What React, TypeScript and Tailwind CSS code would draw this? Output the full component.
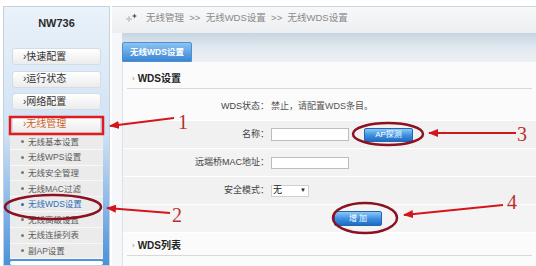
import React from "react";

const mainMenu = ["›快速配置", "›运行状态", "›网络配置"];
const subMenu = [
  "无线基本设置",
  "无线WPS设置",
  "无线安全管理",
  "无线MAC过滤",
  "无线WDS设置",
  "无线高级设置",
  "无线连接列表",
  "副AP设置",
];

export default function App() {
  return (
    <div className="relative h-[266px] w-[536px] overflow-hidden bg-white font-['Liberation_Sans','Noto_Sans_CJK_SC',sans-serif] text-[#333]">
      <div className="flex h-full pl-[3px] pt-[6px]">
        {/* Sidebar */}
        <aside className="flex w-[107px] flex-col border border-[#c6d1db] bg-gradient-to-b from-[#eaf2fa] via-[#cfe1f3] to-[#4a91da]">
          <div className="pt-[10px] text-center text-[11px] leading-[13px] font-bold text-[#2b2b2b]">
            NW736
          </div>
          <div className="mt-[18px] flex flex-col gap-[5.5px] px-[8px]">
            {mainMenu.map((m) => (
              <MenuButton key={m}>{m}</MenuButton>
            ))}
            <MenuButton active>›无线管理</MenuButton>
          </div>
          <ul className="mx-[6px] mt-[2px] bg-[#ebebeb]">
            {subMenu.map((s) => {
              const on = s === "无线WDS设置";
              return (
                <li
                  key={s}
                  className="flex h-[15.6px] items-center gap-[4px] border-b border-[#f8f8f8] pl-[11px] text-[8.5px] leading-[10px]"
                >
                  <span
                    className={`h-[3px] w-[3px] rounded-full ${on ? "bg-[#2f6fb8]" : "bg-[#777]"}`}
                  />
                  <span className={on ? "text-[#2f6fb8]" : "text-[#5a5a5a]"}>{s}</span>
                </li>
              );
            })}
          </ul>
          <div className="mx-[6px] mt-[2px] h-[10px] rounded-[2px] bg-white" />
        </aside>

        {/* Main */}
        <main className="ml-[2px] flex flex-1 flex-col border-t border-[#cfd5db] bg-[#f6f7f8]">
          <div className="flex h-[26px] items-start gap-[8px] bg-gradient-to-b from-[#f7f8f9] to-[#eceff2] pl-[13px] pt-[5px] text-[9.5px] leading-[12px] text-[#8a8a8a]">
            <svg width="13" height="10" viewBox="0 0 13 10" className="mt-[1px]">
              <path d="M1 6h6M4 3v6" stroke="#c4c4c4" strokeWidth="1.4" />
              <path d="M9.5 0.5l0.8 1.7 1.7 0.8-1.7 0.8-0.8 1.7-0.8-1.7-1.7-0.8 1.7-0.8z" fill="#555" />
            </svg>
            <span className="whitespace-pre">无线管理  &gt;&gt;  无线WDS设置  &gt;&gt;  无线WDS设置</span>
          </div>

          <div className="flex flex-1 flex-col pl-[10px]">
            <div className="flex h-[29px] items-end bg-gradient-to-b from-[#c8d5e1] via-[#e1e8ef] to-[#edf1f5]">
              <div className="flex h-[20px] w-[70px] items-center justify-center rounded-t-[2px] border border-[#4f8fcf] bg-gradient-to-b from-[#8cc4f2] to-[#3a86d6] text-[8.5px] font-bold text-white">
                无线WDS设置
              </div>
            </div>

            <div className="flex flex-1 flex-col border-l border-[#dde2e7] bg-[#fbfbfb]">
              <SectionHeader className="h-[27px]">WDS设置</SectionHeader>
              <div className="pt-[4px]">
                <Row bg="bg-[#fbfbfb]" label="WDS状态：">
                  <span className="text-[#555]">禁止，请配置WDS条目。</span>
                </Row>
                <Row bg="bg-[#f1f1f1]" label="名称：">
                  <div className="h-[13px] w-[78px] border border-[#bdbdbd] bg-white" />
                  <BlueButton className="ml-[15px] w-[49px]">AP探测</BlueButton>
                </Row>
                <Row bg="bg-[#f3f3f3]" label="远端桥MAC地址：">
                  <div className="h-[12px] w-[78px] border border-[#bdbdbd] bg-white" />
                </Row>
                <Row bg="bg-[#f1f1f1]" label="安全模式：">
                  <div className="flex h-[12px] w-[38px] items-center justify-between border border-[#d0d0d0] bg-white pl-[1px] pr-[2px] text-[9px] text-[#222]">
                    <span>无</span>
                    <span className="text-[6px]">▼</span>
                  </div>
                </Row>
                <Row bg="bg-[#f4f4f4]" label="">
                  <BlueButton className="ml-[63px] h-[15px] w-[48px]">增 加</BlueButton>
                </Row>
              </div>
              <SectionHeader className="h-[23px]">WDS列表</SectionHeader>
            </div>
          </div>
        </main>
      </div>

      {/* Annotations */}
      <svg className="pointer-events-none absolute inset-0" width="536" height="266">
        <defs>
          <marker
            id="ah"
            markerWidth="10"
            markerHeight="8"
            refX="9"
            refY="4"
            orient="auto"
            markerUnits="userSpaceOnUse"
          >
            <path d="M0 0L10 4L0 8z" fill="#d3161b" />
          </marker>
        </defs>
        <rect x="10" y="117" width="93" height="17" fill="none" stroke="#e11b1f" strokeWidth="2.5" />
        <ellipse cx="53" cy="207" rx="48" ry="12" fill="none" stroke="#8c1221" strokeWidth="2.5" />
        <ellipse cx="388" cy="134" rx="35" ry="11" fill="none" stroke="#8c1221" strokeWidth="2.5" />
        <ellipse cx="365" cy="218" rx="32" ry="15" fill="none" stroke="#8c1221" strokeWidth="2.5" />
        <g stroke="#d3161b" strokeWidth="2" markerEnd="url(#ah)">
          <line x1="174" y1="118" x2="110" y2="126" />
          <line x1="170" y1="213" x2="107" y2="208" />
          <line x1="516" y1="133" x2="429" y2="133" />
          <line x1="503" y1="205" x2="404" y2="215" />
        </g>
        <g fill="#b8312f" fontFamily="'Liberation Serif', serif" fontSize="20">
          <text x="178" y="129">1</text>
          <text x="172" y="222">2</text>
          <text x="517" y="141">3</text>
          <text x="507" y="209">4</text>
        </g>
      </svg>
    </div>
  );
}

function MenuButton({ children, active }: { children: React.ReactNode; active?: boolean }) {
  return (
    <div
      className={`flex h-[17px] items-center rounded-[3px] border border-[#d3dde6] bg-gradient-to-b from-white to-[#ececec] pl-[10px] text-[10px] leading-[12px] ${
        active ? "text-[#c8642a]" : "text-[#333]"
      }`}
    >
      {children}
    </div>
  );
}

function SectionHeader({ children, className }: { children: React.ReactNode; className: string }) {
  return (
    <div className={`mx-[4px] flex items-end gap-[3px] border-b border-[#d9d9d9] pb-[3px] pl-[5px] ${className}`}>
      <span className="text-[8px] leading-[12px] text-[#888]">›</span>
      <span className="text-[10px] leading-[12px] font-bold text-[#222]">{children}</span>
    </div>
  );
}

function Row({ label, bg, children }: { label: string; bg: string; children?: React.ReactNode }) {
  return (
    <div className={`flex h-[28px] items-center border-b border-white text-[9px] ${bg}`}>
      <div className="w-[146px] text-right text-[#444]">{label}</div>
      <div className="ml-[2px] flex items-center">{children}</div>
    </div>
  );
}

function BlueButton({ children, className }: { children: React.ReactNode; className: string }) {
  return (
    <div
      className={`flex h-[14px] items-center justify-center rounded-[2px] border border-[#2466b0] bg-gradient-to-b from-[#8cc8f6] via-[#3f92e2] to-[#1e6bc4] text-[8px] leading-[10px] text-white ${className}`}
    >
      {children}
    </div>
  );
}
